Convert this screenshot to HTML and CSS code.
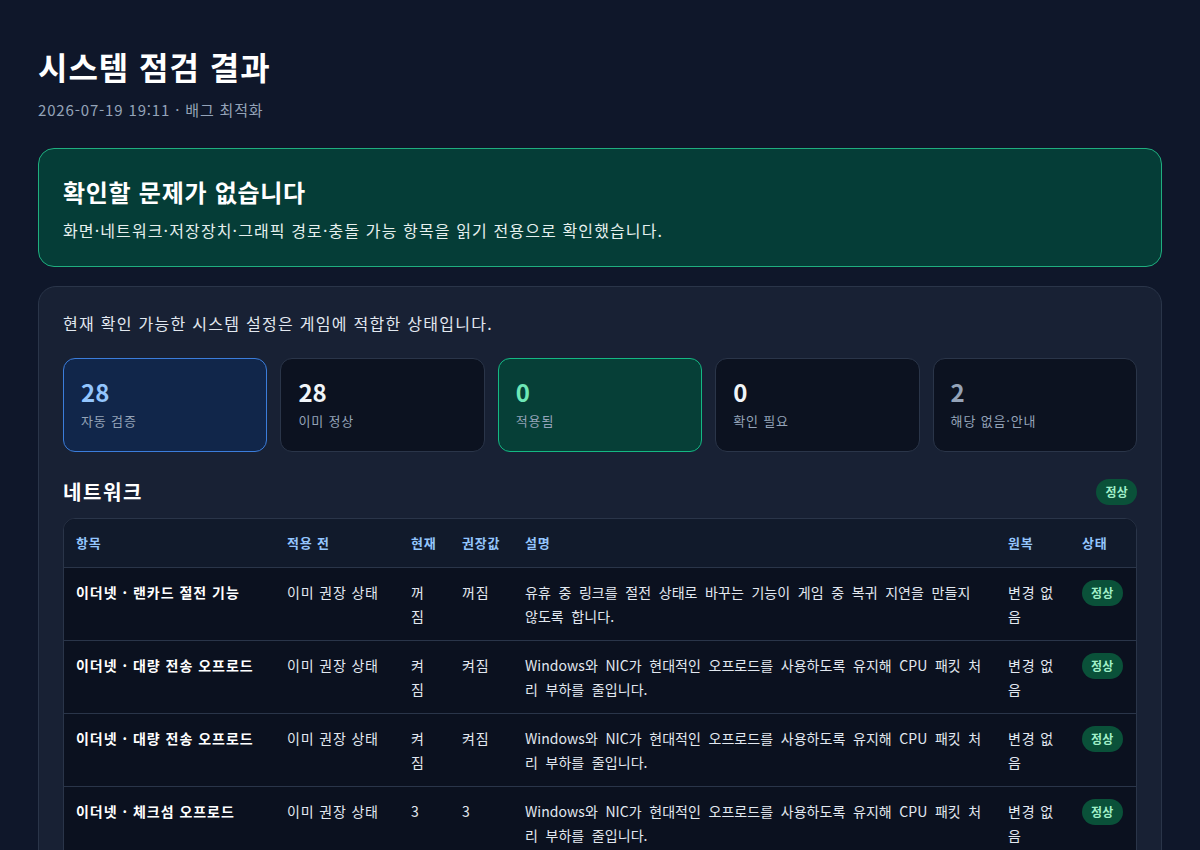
FILE: index.html
```html
<!DOCTYPE html>
<html lang="ko">
<head>
<meta charset="utf-8">
<title>시스템 점검 결과</title>
<link rel="stylesheet" href="styles.css">
</head>
<body>
<main class="page">
  <header class="page-head">
    <h1 class="title">시스템 점검 결과</h1>
    <p class="subtitle">2026-07-19 19:11 · 배그 최적화</p>
  </header>

  <section class="banner">
    <h2 class="banner-title">확인할 문제가 없습니다</h2>
    <p class="banner-text">화면·네트워크·저장장치·그래픽 경로·충돌 가능 항목을 읽기 전용으로 확인했습니다.</p>
  </section>

  <section class="panel">
    <p class="panel-intro">현재 확인 가능한 시스템 설정은 게임에 적합한 상태입니다.</p>

    <div class="stats">
      <div class="stat stat-blue">
        <div class="stat-num">28</div>
        <div class="stat-label">자동 검증</div>
      </div>
      <div class="stat">
        <div class="stat-num">28</div>
        <div class="stat-label">이미 정상</div>
      </div>
      <div class="stat stat-green">
        <div class="stat-num">0</div>
        <div class="stat-label">적용됨</div>
      </div>
      <div class="stat">
        <div class="stat-num">0</div>
        <div class="stat-label">확인 필요</div>
      </div>
      <div class="stat stat-muted">
        <div class="stat-num">2</div>
        <div class="stat-label">해당 없음·안내</div>
      </div>
    </div>

    <div class="section-head">
      <h3 class="section-title">네트워크</h3>
      <span class="pill">정상</span>
    </div>

    <div class="table-wrap">
      <table class="checks">
        <colgroup>
          <col class="c-item">
          <col class="c-before">
          <col class="c-now">
          <col class="c-rec">
          <col class="c-desc">
          <col class="c-undo">
          <col class="c-state">
        </colgroup>
        <thead>
          <tr>
            <th>항목</th>
            <th>적용 전</th>
            <th>현재</th>
            <th>권장값</th>
            <th>설명</th>
            <th>원복</th>
            <th>상태</th>
          </tr>
        </thead>
        <tbody>
          <tr>
            <td class="item">이더넷 · 랜카드 절전 기능</td>
            <td>이미 권장 상태</td>
            <td>꺼짐</td>
            <td>꺼짐</td>
            <td class="desc">유휴 중 링크를 절전 상태로 바꾸는 기능이 게임 중 복귀 지연을 만들지 않도록 합니다.</td>
            <td>변경 없음</td>
            <td><span class="pill">정상</span></td>
          </tr>
          <tr>
            <td class="item">이더넷 · 대량 전송 오프로드</td>
            <td>이미 권장 상태</td>
            <td>켜짐</td>
            <td>켜짐</td>
            <td class="desc">Windows와 NIC가 현대적인 오프로드를 사용하도록 유지해 CPU 패킷 처리 부하를 줄입니다.</td>
            <td>변경 없음</td>
            <td><span class="pill">정상</span></td>
          </tr>
          <tr>
            <td class="item">이더넷 · 대량 전송 오프로드</td>
            <td>이미 권장 상태</td>
            <td>켜짐</td>
            <td>켜짐</td>
            <td class="desc">Windows와 NIC가 현대적인 오프로드를 사용하도록 유지해 CPU 패킷 처리 부하를 줄입니다.</td>
            <td>변경 없음</td>
            <td><span class="pill">정상</span></td>
          </tr>
          <tr>
            <td class="item">이더넷 · 체크섬 오프로드</td>
            <td>이미 권장 상태</td>
            <td>3</td>
            <td>3</td>
            <td class="desc">Windows와 NIC가 현대적인 오프로드를 사용하도록 유지해 CPU 패킷 처리 부하를 줄입니다.</td>
            <td>변경 없음</td>
            <td><span class="pill">정상</span></td>
          </tr>
          <tr>
            <td class="item">이더넷 · 수신 측 배율 조정</td>
            <td>이미 권장 상태</td>
            <td>켜짐</td>
            <td>켜짐</td>
            <td class="desc">수신 패킷 처리를 여러 CPU 코어로 나누어 네트워크 지연 편차를 줄입니다.</td>
            <td>변경 없음</td>
            <td><span class="pill">정상</span></td>
          </tr>
        </tbody>
      </table>
    </div>
  </section>
</main>
</body>
</html>
```

FILE: styles.css
```css
* {
  box-sizing: border-box;
}

html,
body {
  margin: 0;
  background: #0f172a;
}

body {
  font-family: "Noto Sans CJK KR", "Noto Sans", sans-serif;
  color: #e2e8f0;
  font-size: 14px;
  line-height: 24px;
  letter-spacing: 0.06em;
}

.page {
  padding: 46px 38px 40px;
}

/* heading */
.title {
  margin: 0;
  font-size: 32px;
  line-height: 40px;
  font-weight: 700;
  letter-spacing: 0.03em;
  color: #ffffff;
}

.subtitle {
  margin: 13px 0 0;
  font-size: 15px;
  line-height: 22px;
  color: #94a3b8;
}

/* success banner */
.banner {
  margin-top: 27px;
  padding: 27px 24px 24px;
  background: #053d37;
  border: 1px solid #1fae7f;
  border-radius: 16px;
}

.banner-title {
  margin: 0;
  font-size: 24px;
  line-height: 32px;
  font-weight: 700;
  letter-spacing: 0.03em;
  color: #ffffff;
}

.banner-text {
  margin: 10px 0 0;
  font-size: 16px;
  line-height: 24px;
  letter-spacing: 0.07em;
  color: #e6f0ee;
}

/* main panel */
.panel {
  margin-top: 19px;
  padding: 24px 24px 24px;
  background: #182134;
  border: 1px solid #2a3549;
  border-radius: 18px;
}

.panel-intro {
  margin: 0;
  font-size: 16px;
  line-height: 24px;
  letter-spacing: 0.08em;
  color: #e2e8f0;
}

.stats {
  margin-top: 23px;
  display: grid;
  grid-template-columns: repeat(5, 1fr);
  gap: 13px;
}

.stat {
  padding: 18px 17px 20px;
  background: #0c1220;
  border: 1px solid #2a3549;
  border-radius: 12px;
}

.stat-num {
  font-size: 24px;
  line-height: 30px;
  font-weight: 700;
  letter-spacing: 0;
  color: #f1f5f9;
}

.stat-label {
  margin-top: 4px;
  font-size: 13px;
  line-height: 20px;
  color: #94a3b8;
}

.stat-blue {
  background: #11264a;
  border-color: #3b7ddb;
}

.stat-blue .stat-num {
  color: #93c5fd;
}

.stat-green {
  background: #063f37;
  border-color: #14b883;
}

.stat-green .stat-num {
  color: #6ee7b7;
}

.stat-muted .stat-num {
  color: #94a3b8;
}

/* section */
.section-head {
  margin-top: 27px;
  display: flex;
  align-items: center;
  justify-content: space-between;
}

.section-title {
  margin: 0;
  font-size: 20px;
  line-height: 26px;
  font-weight: 700;
  letter-spacing: 0.08em;
  color: #ffffff;
}

.pill {
  display: inline-block;
  padding: 2px 9px;
  border-radius: 999px;
  background: #0a5139;
  color: #a0f0c9;
  font-size: 12px;
  line-height: 22px;
  font-weight: 700;
  letter-spacing: 0.02em;
  white-space: nowrap;
}

/* table */
.table-wrap {
  margin-top: 13px;
  background: #0b111f;
  border: 1px solid #2a3549;
  border-radius: 12px;
  overflow: hidden;
}

.checks {
  width: 100%;
  border-collapse: separate;
  border-spacing: 0;
  table-layout: fixed;
}

.c-item { width: 211px; }
.c-before { width: 124px; }
.c-now { width: 51px; }
.c-rec { width: 63px; }
.c-desc { width: auto; }
.c-undo { width: 74px; }
.c-state { width: 66px; }

.checks th,
.checks td {
  padding: 12px 12px;
  text-align: left;
  vertical-align: top;
  font-size: 14px;
  line-height: 24px;
}

.checks th {
  font-size: 13px;
  font-weight: 700;
  color: #93c5fd;
  background: #111a2b;
  border-bottom: 1px solid #2a3549;
}

.checks td {
  color: #e2e8f0;
  border-bottom: 1px solid #2a3549;
}

.checks tbody tr:last-child td {
  border-bottom: 0;
}

.checks td.item {
  font-weight: 700;
  letter-spacing: 0.07em;
  color: #ffffff;
}

/* long descriptions mix Hangul and Latin; keep Latin runs tight */
.checks td.desc {
  letter-spacing: 0.05px;
  word-spacing: 3.6px;
}
```
